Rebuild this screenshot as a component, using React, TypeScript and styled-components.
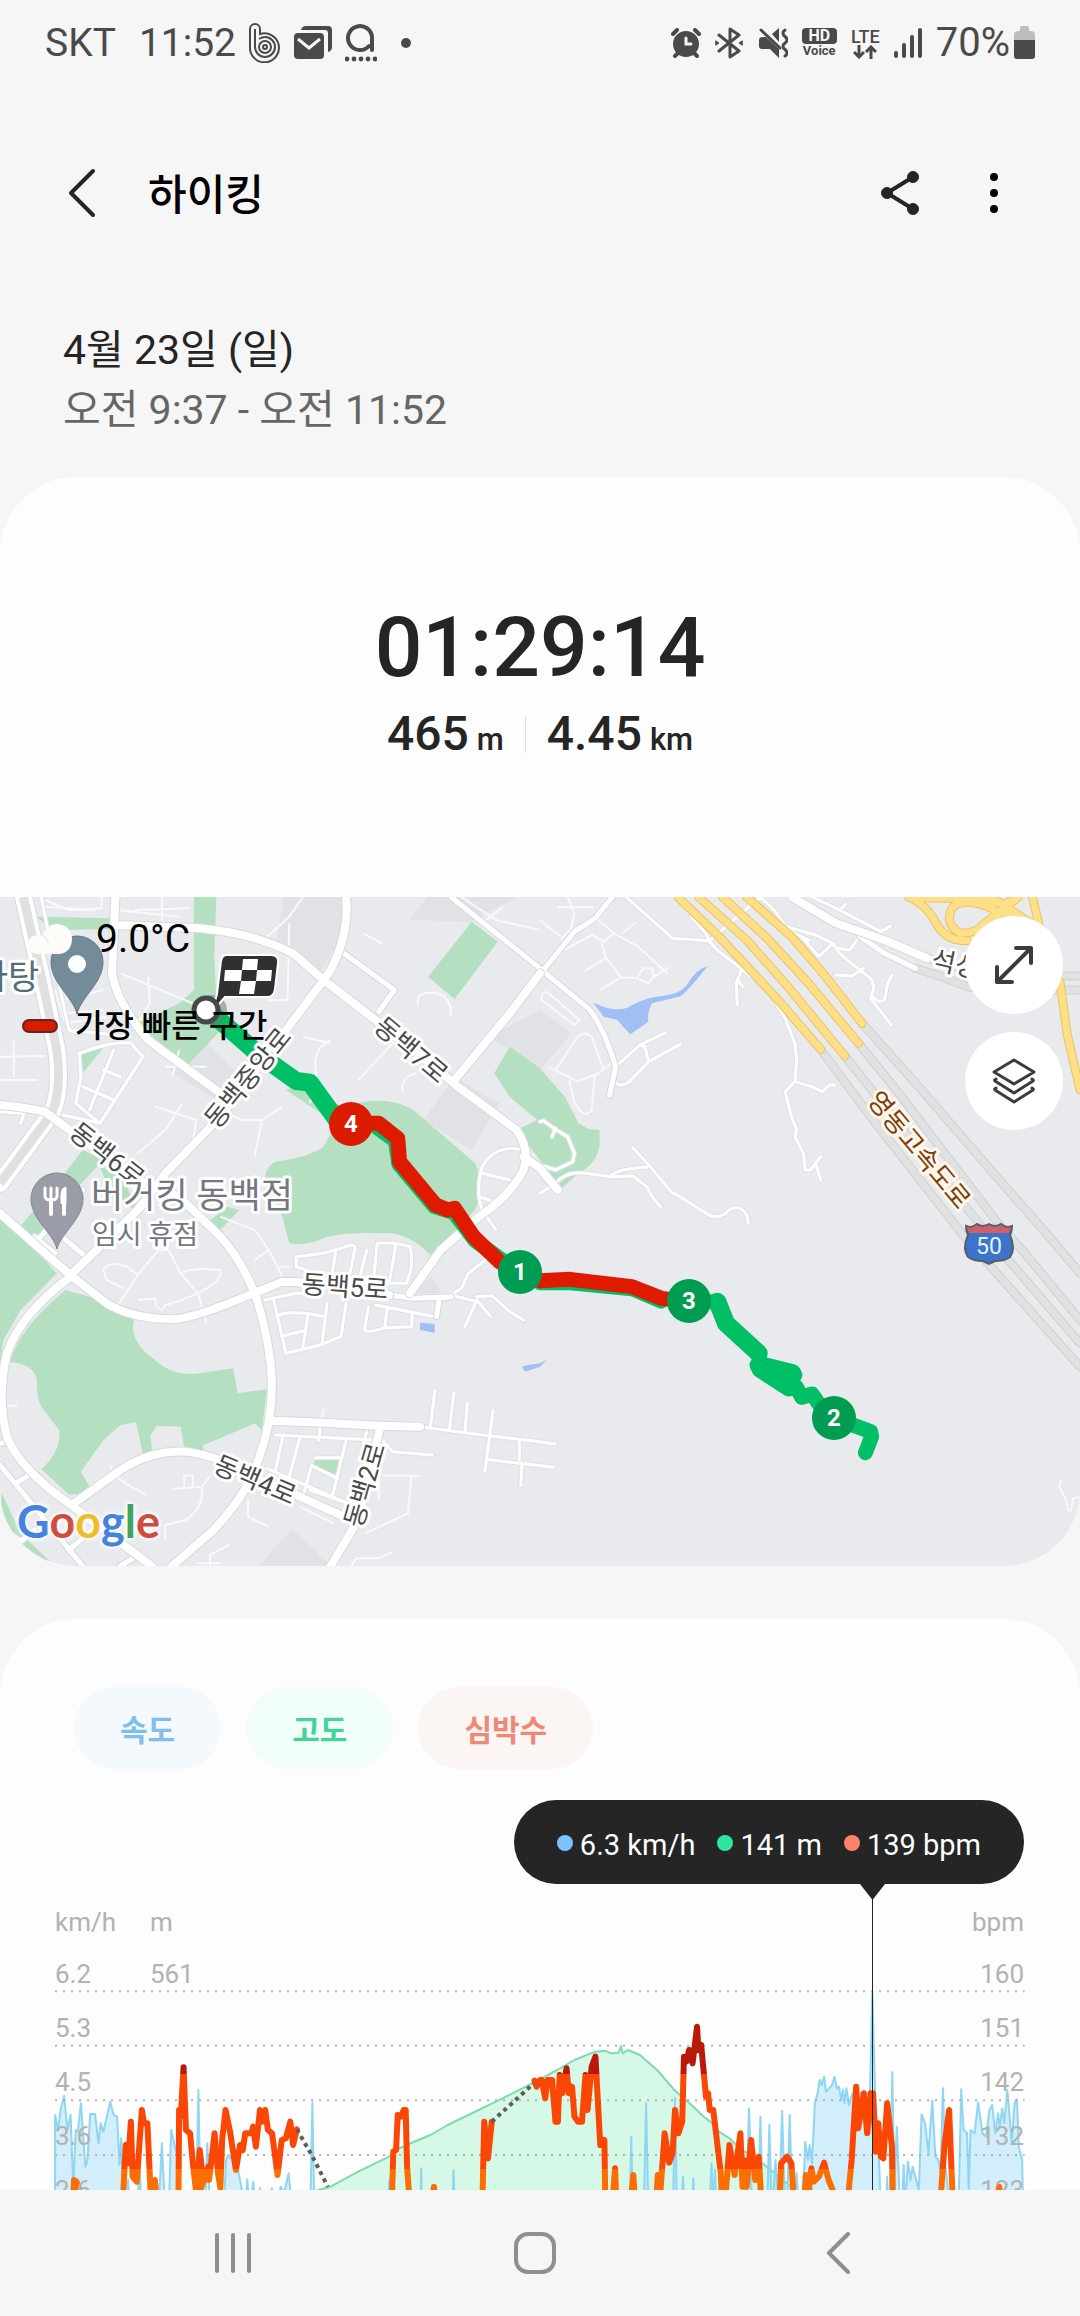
import React from "react";
import styled, { createGlobalStyle } from "styled-components";

const ink = "#252525";
const statusInk = "#4a4a4a";
const pageBg = "#f6f6f6";
const cardBg = "#fdfdfd";

const GlobalStyle = createGlobalStyle`
  * { box-sizing: border-box; }
  html, body { margin: 0; padding: 0; background: ${pageBg}; }
  body {
    font-family: Roboto, "Noto Sans CJK KR", sans-serif;
    color: ${ink};
  }
  button { font: inherit; color: inherit; border: 0; padding: 0; margin: 0; background: none; cursor: pointer; }
  h1, p, ul { margin: 0; padding: 0; }
  svg { display: block; flex: none; }
`;

const Screen = styled.div`
  display: flex;
  flex-direction: column;
  height: 100vh;
  background: ${pageBg};
`;

const Main = styled.main`
  flex: 1;
  min-height: 0;
  overflow: hidden auto;
  scrollbar-width: none;
`;

/* ---------- status bar ---------- */

const StatusBar = styled.div`
  display: flex;
  align-items: center;
  justify-content: space-between;
  height: 86px;
  padding: 0 45px;
  color: ${statusInk};
  line-height: 48px;
`;

const StatusGroup = styled.div<{ $gap: number; $size: number }>`
  display: flex;
  align-items: center;
  gap: ${(p) => p.$gap}px;
  font-size: ${(p) => p.$size}px;
`;

const Carrier = styled.span`
  margin-right: 10px;
`;

const VoiceBadge = styled.span`
  display: flex;
  flex-direction: column;
  align-items: center;
  width: 35px;
  font-size: 13px;
  line-height: 14px;
  font-weight: 700;
`;

const HdBox = styled.span`
  width: 100%;
  border-radius: 4px;
  background: ${statusInk};
  color: ${pageBg};
  font-size: 16px;
  line-height: 16px;
  text-align: center;
`;

const LteBadge = styled.span`
  display: flex;
  flex-direction: column;
  align-items: center;
  width: 29px;
  font-size: 18px;
  line-height: 17px;
  font-weight: 500;
`;

const BatteryGroup = styled.span`
  display: flex;
  align-items: center;
  gap: 4px;
`;

/* ---------- header ---------- */

const AppBar = styled.header`
  display: flex;
  align-items: center;
  height: 110px;
  margin-top: 52px;
  padding: 0 50px;
`;

const IconButton = styled.button`
  display: flex;
  align-items: center;
  justify-content: center;
  width: 64px;
  height: 64px;
`;

const Title = styled.h1`
  flex: 1;
  margin-left: 34px;
  padding-top: 6px;
  font-size: 42px;
  line-height: 56px;
  font-weight: 500;
  color: #000;
`;

const Actions = styled.div`
  display: flex;
  gap: 30px;
  margin-right: 4px;
`;

const When = styled.section`
  padding: 72px 63px 37px;
  font-size: 41px;
  line-height: 60px;
`;

const TimeRange = styled.p`
  color: #666;
`;

/* ---------- summary card ---------- */

const SummaryCard = styled.section`
  overflow: hidden;
  border-radius: 76px;
  background: ${cardBg};
`;

const Summary = styled.div`
  display: flex;
  flex-direction: column;
  align-items: center;
  gap: 6px;
  padding: 121px 0 133px;
`;

const Duration = styled.p`
  font-size: 84px;
  line-height: 100px;
  font-weight: 500;
`;

const Stats = styled.div`
  display: flex;
  align-items: center;
  gap: 21px;
  font-weight: 500;
`;

const Stat = styled.p`
  font-size: 48px;
  line-height: 60px;
`;

const Unit = styled.span`
  margin-left: 8px;
  font-size: 31px;
  line-height: 32px;
`;

const StatDivider = styled.span`
  width: 1px;
  height: 37px;
  background: #dcdcdc;
`;

/* ---------- map ---------- */

const MapFrame = styled.div`
  position: relative;
`;

const MapSvg = styled.svg`
  width: 100%;
  height: auto;

  .terrain path { vector-effect: non-scaling-stroke; stroke-linejoin: round; }
  .labels text { paint-order: stroke; stroke-linejoin: round; dominant-baseline: central; text-anchor: middle; }
`;

const MapInfo = styled.div`
  position: absolute;
  top: 17px;
  left: 22px;
  display: flex;
  flex-direction: column;
  gap: 42px;
  color: #000;
`;

const Weather = styled.div`
  display: flex;
  align-items: center;
  gap: 23px;
  padding-left: 6px;
  font-size: 39px;
  line-height: 50px;
`;

const Legend = styled.div`
  display: flex;
  align-items: center;
  gap: 17px;
  font-size: 32px;
  line-height: 40px;
  font-weight: 500;
`;

const LegendSwatch = styled.span`
  width: 36px;
  height: 14px;
  border: 2px solid #5b2a24;
  border-radius: 7px;
  background: #db1b00;
`;

const MapActions = styled.div`
  position: absolute;
  top: 19px;
  right: 17px;
  display: flex;
  flex-direction: column;
  gap: 18px;
`;

const RoundButton = styled.button`
  display: flex;
  align-items: center;
  justify-content: center;
  width: 98px;
  height: 98px;
  border-radius: 50%;
  background: #fff;
`;

const GoogleMark = styled.span`
  position: absolute;
  left: 17px;
  bottom: 15px;
  font-family: Lato, sans-serif;
  font-size: 45px;
  line-height: 60px;
  font-weight: 700;
  text-shadow: 0 0 4px #fff, 0 0 4px #fff, 0 0 6px #fff;
`;

const Letter = styled.span<{ $color: string }>`
  color: ${(p) => p.$color};
`;

/* ---------- chart card ---------- */

const ChartCard = styled.section`
  margin-top: 53px;
  padding: 68px 56px 60px 55px;
  border-radius: 76px;
  background: ${cardBg};
`;

const Chips = styled.div`
  display: flex;
  gap: 25px;
  padding-left: 19px;
`;

const Chip = styled.button<{ $bg: string; $fg: string }>`
  height: 82px;
  padding: 0 46px;
  border-radius: 41px;
  background: ${(p) => p.$bg};
  color: ${(p) => p.$fg};
  font-size: 30px;
  font-weight: 700;
`;

const Tooltip = styled.div`
  display: flex;
  align-items: center;
  gap: 22px;
  width: fit-content;
  height: 84px;
  margin: 31px 0 0 auto;
  padding: 6px 43px 0;
  border-radius: 42px;
  background: ${ink};
  color: #fff;
  font-size: 29px;
  line-height: 36px;
`;

const Reading = styled.span<{ $dot: string }>`
  display: flex;
  align-items: center;
  gap: 7px;

  &::before {
    content: "";
    width: 16px;
    height: 16px;
    margin-bottom: 4px;
    border-radius: 50%;
    background: ${(p) => p.$dot};
  }
`;

const Chart = styled.div`
  display: grid;
  > * { grid-area: 1 / 1; }
`;

const Plot = styled.svg`
  width: 100%;
  height: 100%;
  overflow: visible;

  path { vector-effect: non-scaling-stroke; stroke-linejoin: round; fill: none; }
`;

const Axis = styled.div`
  display: grid;
  grid-template-rows: 52px;
  grid-auto-rows: 54px;
  padding-top: 23px;
  color: #b2b2b2;
  font-size: 26px;
  line-height: 30px;
`;

const AxisRow = styled.div`
  display: grid;
  grid-template-columns: 95px 1fr auto;
`;

/* ---------- navigation ---------- */

const NavBar = styled.nav`
  display: flex;
  flex: none;
  height: 126px;
  padding: 0 91px 0 82px;
  background: ${pageBg};
`;

const NavButton = styled.button`
  display: flex;
  flex: 1;
  align-items: center;
  justify-content: center;
`;

const blocks = [
  "M825 21H1000L990 140L930 250L800 160Z",
  "M1240 21L1190 90L1370 95L1500 21Z",
  "M490 540L600 460L700 560L640 640Z",
  "M1320 560L1450 640L1370 780L1230 690Z",
  "M1568 360L1660 430L1568 540L1420 440Z",
  "M850 1915L960 2028H750Z",
  "M1255 1160L1280 1210H1190Z",
];

const parks = [
  "M563 21H628L622 200L628 320L660 400L540 530L400 400L520 340L563 300Z",
  "M107 80L320 85V118L150 120Z",
  "M1370 95L1445 155L1320 327L1243 260Z",
  "M230 490L310 462L235 555Z",
  "M1000 650Q1120 610 1200 660L1380 820Q1410 880 1380 960L1250 1095Q1180 1020 1100 1030Q1020 1025 950 1040Q890 1070 840 1060L820 980L770 880Q765 830 800 815Q900 800 940 770L975 700L830 600L860 590Z",
  "M1480 470L1568 535L1640 620L1680 700L1710 718L1740 720L1742 760Q1735 820 1680 850L1625 900L1568 810L1500 720L1560 690L1480 620L1435 550Z",
  "M240 780L300 810L200 920L100 1060L55 1015L180 860Z",
  "M290 830L350 850L400 960L330 930Z",
  "M600 1000L660 950L695 960L620 1040Z",
  "M0 965L165 1150L60 1260L10 1350L0 1420Z",
  "M190 1200L260 1220L340 1270L390 1285Q370 1350 450 1410Q500 1460 580 1450L677 1435L690 1510L775 1498L760 1620L740 1600L650 1640L590 1665V1685L535 1675L525 1610L455 1607L437 1635L442 1690L415 1692L395 1597L350 1605L300 1650L235 1745L260 1790Q240 1815 200 1813L120 1738Q180 1680 172 1620L120 1550Q105 1520 108 1470Q95 1420 30 1417Q50 1320 190 1200Z",
  "M5 1810L60 1930L150 2020L100 2010L0 1880Z",
  "M915 1703L990 1705L980 1765L912 1730Z",
];

const water = [
  "M1723 338Q1778 365 1818 355Q1868 325 1908 320Q1978 315 1998 280Q2018 240 2055 228Q2008 290 1978 318L1893 340Q1878 370 1883 395L1830 433Q1808 410 1793 390L1753 380Z",
  "M1220 1298L1262 1302V1328L1220 1320Z",
  "M1515 1430L1535 1425L1568 1420L1588 1410L1568 1430L1525 1445Z",
];

const lanes = [
  "M130 30L200 60L295 55V21M130 50L280 60",
  "M470 21V120M390 60L550 55M340 60L520 80",
  "M880 21L840 80L765 150",
  "M840 100L835 330L780 330",
  "M1340 21L1440 90L1568 120M1400 100L1460 50",
  "M1215 350Q1200 300 1270 310Q1310 320 1310 380M1170 400L1140 460L1040 570",
  "M960 450Q900 480 920 560L900 640",
  "M880 440L960 460M1055 130L1110 160",
  "M1170 610Q1160 560 1210 550",
  "M430 260L435 340L400 400M350 250L560 340",
  "M180 330L300 300M190 370L300 360M160 300L190 400L310 380",
  "M0 500L130 498M40 450V560M0 570H110",
  "M480 530H600M520 480L500 560",
  "M450 650L570 690L560 760M530 640L480 720L400 790",
  "M600 640L700 690L760 690L820 650M760 690L740 800",
  "M640 980L740 1020L780 1080L820 1160M740 1110L780 1080M810 1130H840",
  "M300 1140Q320 1110 370 1130L400 1155L340 1250M300 1140L310 1170L360 1195",
  "M400 1155L460 1080L490 1080L525 1150L575 1210L600 1300M575 1210L515 1235L480 1245L470 1260L455 1250L450 1225L400 1230M525 1150Q560 1130 640 1140Q650 1170 575 1210",
  "M0 1547H50M320 1725L330 1755L380 1790L425 1815",
  "M500 1797L585 1790Q595 1850 540 1890L480 1905V1950M535 1797V1757L560 1755V1795M585 1790L610 1760",
  "M665 1965L610 1995V2028M570 2020H640M720 1830V1880L780 1910M870 1850L970 1900",
  "M940 1555L930 1620M1110 1757H1220M1195 1757L1185 1870L1060 1930M1100 1757V1830",
  "M1020 2028L1035 2005H1100L1140 1985",
  "M1738 90L1783 130L1853 170L1938 250M1783 130L1748 160L1758 200L1803 262L1848 265L1868 235L1893 235L1898 260L1883 280L1848 265",
  "M1808 130L1846 97M1638 180L1718 135L1753 155M1698 243L1758 205M1743 300L1803 262M1900 260L1940 232",
  "M1648 21L1668 70L1658 115L1628 150M1568 90L1628 140M1618 52H1723",
  "M1593 530L1678 575L1738 550L1773 520M1613 540L1678 440Q1698 420 1718 440L1753 540",
  "M1653 570L1668 640Q1698 690 1718 660L1728 550",
  "M1573 315L1588 305L1683 390L1668 405L1573 330Z",
  "M3080 1770L3076 1790L3096 1830L3102 1860L3110 1862L3116 1825L3136 1820",
];

const streets = [
  "M230 490Q330 450 380 460L415 500L290 700L220 640L235 560Z",
  "M330 480L260 660M240 590L330 630M350 560L300 540M160 670L290 700",
  "M120 21L150 180L200 420L230 430",
  "M0 665L70 670L60 700M200 420L380 440",
  "M860 1100L940 1090L1020 1065Q1035 1065 1030 1080L1010 1180M860 1100V1130L900 1145M975 1085L965 1150",
  "M1065 1080L1040 1180M1095 1060Q1150 1055 1190 1070Q1205 1120 1180 1180L1130 1180M1095 1060L1085 1170M1150 1060L1130 1180",
  "M770 1230L860 1210L900 1213M795 1230L830 1390L930 1365L990 1340L1005 1240M810 1275Q850 1260 945 1280M820 1338L885 1322M895 1270L878 1380M950 1240L935 1362",
  "M1070 1250L1058 1320L1075 1325L1120 1313L1195 1310L1197 1265M1125 1250L1117 1313M1090 1245L1270 1282L1275 1225",
  "M1350 1310L1385 1230L1425 1280M1310 1215L1340 1195L1360 1150L1410 1110M1385 1220L1430 1218L1480 1265L1520 1290M1310 1215L1385 1235",
  "M1220 1610L1400 1635L1568 1655L1613 1662M1263 1500L1250 1608M1318 1508L1305 1618M1357 1540L1350 1625M1432 1560L1408 1745M1412 1708L1608 1732M1508 1655V1710M1516 1718L1512 1787",
  "M800 1635L1090 1650M820 1645L800 1740M870 1645L840 1760M930 1610L925 1650M1005 1650L965 1820M915 1703L990 1703M910 1730L980 1765M775 1735L1010 1840L900 1800M905 1725L880 1820M1065 1625L1055 1660",
  "M1110 1650L1140 1685L1255 1695",
  "M1818 21L1953 145L2058 152L2088 185L2158 240L2228 300L2278 380L2308 460L2313 510L2308 575L2280 605L2298 680L2313 720L2308 740L2333 790L2338 840L2353 840L2383 800M2368 820L2383 870",
  "M2308 575L2358 590L2388 605L2408 585L2423 585",
  "M2208 21L2248 60L2288 120L2348 150M2058 155L2118 100L2208 21M2008 80L2050 130L2058 152M2153 240L2138 280L2141 345M2141 270L2158 290",
  "M2283 110L2368 135L2418 160L2438 190L2478 225L2528 265L2538 290L2528 325L2588 405M2418 160L2378 200L2328 140",
  "M2428 255L2473 258L2508 235M2533 320L2553 335L2568 330L2578 280L2590 255M2358 21L2438 60L2558 125L2586 108M2438 60L2456 42M2428 175L2468 180L2488 150",
  "M1788 530L1858 465L1933 428M1858 465L1873 470L1883 515L1975 463M1883 515L1828 575Q1803 595 1783 575",
  "M1838 773L1888 830L1948 905L1998 935L2058 975Q2088 990 2118 960Q2148 940 2168 975L2173 998",
  "M1613 880Q1648 840 1698 850L1778 860L1838 858L1878 890L1893 920L1918 950M1773 858Q1798 835 1878 832",
  "M1568 695L1578 692L1608 715L1648 740L1668 790L1663 815L1613 840L1568 825M1613 715L1603 740",
  "M1568 910L1613 880M1440 1020L1400 960Q1380 900 1400 830Q1440 760 1520 780M1400 850L1480 870M1390 920L1450 940",
];

const avenues = [
  "M985 180L1145 300L1100 365",
  "M1310 21L1568 235",
  "M1778 21L1728 85L1668 125L1578 240L1568 250M1578 245L1708 355Q1748 400 1788 530L1770 615",
  "M0 1725L240 2028M0 1660L25 1655M45 1780L85 1755M30 1930L60 1955L100 1920M200 1980L280 1910M350 2028L385 2005",
  "M100 1060L240 900M180 1040L260 1110M100 1040L160 1090",
  "M1130 1215L1200 1225L1310 1220L1275 1225L1268 1280",
  "M2498 140L2568 190L2658 235",
];

const arterials = [
  "M335 21L325 250Q340 340 430 450L640 610",
  "M340 105L580 115Q740 130 850 190L940 270L1090 390L1330 590L1500 720Q1540 780 1520 840Q1480 920 1390 980L1280 1080L1190 1210",
  "M1005 21Q1015 130 960 240L940 270L780 490L640 680L480 850L400 960L210 1150",
  "M1568 250L1480 370L1320 570M1520 800L1568 835L1620 900",
  "M0 645Q60 650 130 665L280 780L400 870L520 920L640 1040Q700 1110 740 1210Q785 1350 790 1480Q790 1600 750 1710Q720 1810 620 1920L500 2028",
  "M205 1160Q60 1270 20 1390Q-10 1520 20 1640Q60 1740 200 1840L440 2028",
  "M0 970L120 1080L210 1160L310 1240Q380 1285 500 1288Q560 1285 700 1225L820 1175L900 1178L1130 1215",
  "M215 1840L350 1740Q440 1680 540 1685Q640 1700 700 1745L850 1810L1030 1895",
  "M790 1592L940 1598L1100 1607L1220 1610M1105 1607L1040 1890L960 2028",
  "M2300 21L2428 100L2568 150L2693 205",
];

const expressway = [
  "M1968 21L2088 140L2188 250L2268 340L2383 478",
  "M2028 21L2168 150L2288 290L2453 498",
  "M2098 21L2228 145L2348 280L2493 460",
  "M2168 21L2298 140L2398 260L2503 400",
  "M2638 21Q2688 40 2718 100Q2748 155 2808 152",
  "M2928 35Q2868 130 2788 130Q2738 100 2768 50Q2808 20 2888 60L2998 110",
  "M2668 24Q2818 22 2908 40M2878 21L3008 110M2958 21L2908 60L2848 110M2998 21L3018 110",
  "M3078 275L3098 430L3136 600",
];

const tunnels = [
  "M2383 478L2528 680L2808 1050L2868 1120L3136 1430",
  "M2453 498L2578 660L2858 1020L2928 1110L3136 1360",
  "M2493 460L2618 620L2898 1000L2968 1080L3136 1290",
  "M2503 400L2668 590L2868 830L3038 1030L3136 1150",
  "M2658 235L2748 265L2808 290L2900 300H3136M2693 205L2808 240L2900 258H3136",
];

const routeGreen = [
  "M600 360L750 490L860 575L900 580L985 700",
  "M1095 712L1148 752L1158 822L1262 950L1318 968L1380 1052L1510 1150",
  "M1568 1178L1655 1178L1835 1196L1920 1233",
  "M2003 1235H2083L2108 1305L2203 1385L2205 1420L2303 1445L2308 1455L2283 1465",
  "M2198 1425L2205 1440L2290 1497L2313 1492L2328 1522L2358 1512L2378 1542L2423 1585L2528 1625L2531 1640L2513 1688",
];

const routeDoubled = "M620 375L750 492L860 573L900 578L985 700M2083 1235L2108 1300L2203 1390";

const routeRed =
  "M1020 700H1100L1155 745L1160 815L1265 945L1300 960L1320 955L1375 1040L1450 1115L1510 1145L1568 1172L1655 1168L1835 1190L1920 1225L2003 1235";

const roadNames = [
  { text: "동백7로", x: 411, y: 153, turn: 40 },
  { text: "동백중앙로", x: 248, y: 181, turn: -51 },
  { text: "동백6로", x: 107, y: 258, turn: 38 },
  { text: "동백5로", x: 345, y: 390, turn: 4 },
  { text: "동백4로", x: 255, y: 583, turn: 23 },
  { text: "동백2로", x: 365, y: 588, turn: -74 },
  { text: "석성로", x: 967, y: 70, turn: 12 },
];

const splits = [
  { n: 4, x: 351, y: 227, color: "#db1b00" },
  { n: 1, x: 520, y: 375, color: "#009c52" },
  { n: 3, x: 689, y: 404, color: "#009c52" },
  { n: 2, x: 834, y: 521, color: "#009c52" },
];

function Road({ paths, width, color = "#fff", casing = "#d6d9de" }: { paths: string[]; width: number; color?: string; casing?: string }) {
  const d = paths.join("");
  return (
    <g fill="none" strokeLinecap="round">
      <path d={d} stroke={casing} strokeWidth={width + 2} />
      <path d={d} stroke={color} strokeWidth={width} />
    </g>
  );
}

function TrailMap() {
  const rail = "M68 21L120 260L165 480Q180 600 150 670L0 880";
  return (
    <MapSvg viewBox="0 0 1080 669" role="img" aria-label="하이킹 경로 지도">
      <rect width="1080" height="669" fill="#e8eaed" />
      <g className="terrain" transform="scale(.34439 .33333) translate(0 -21)">
        <path d={blocks.join("")} fill="#e1e2e6" />
        <path d={parks.join("")} fill="#b4dfc1" />
        <path d={water.join("")} fill="#9fbff5" />
        <path d={lanes.join("")} fill="none" stroke="#f8f9fa" strokeWidth="2" />
        <Road paths={streets} width={3} casing="#dfe1e5" />
        <Road paths={[rail]} width={17} />
        <path d={rail} fill="none" stroke="#e0e0e0" strokeWidth="9" />
        <Road paths={tunnels} width={7} color="#e0e1e1" casing="#cfd0d0" />
        <Road paths={avenues} width={5} />
        <Road paths={arterials} width={8} />
        <Road paths={expressway} width={7} color="#fddf88" casing="#edc266" />
        <g fill="none" strokeLinecap="round" strokeWidth="15">
          <path d={routeGreen.join("")} stroke="#01bf64" />
          <path d={routeDoubled} stroke="#01bf64" strokeWidth="18" />
          <path d={routeRed} stroke="#de1b00" />
        </g>
      </g>

      <g className="labels" fontSize="26" fill="#4a4a4a" stroke="#fff" strokeWidth="6">
        {roadNames.map((r) => (
          <text key={r.text} transform={`translate(${r.x} ${r.y}) rotate(${r.turn})`}>{r.text}</text>
        ))}
        <text transform="translate(919 253) rotate(50)" fill="#7a3d0c" stroke="#fff7ea">영동고속도로</text>
        <text x="8" y="80" fontSize="34" fill="#546e7a">사탕</text>
        <text x="192" y="299" fontSize="35" fill="#757780">버거킹 동백점</text>
        <text x="145" y="338" fontSize="27" fill="#757780">임시 휴점</text>
      </g>

      <path d="M77 117C73 100 51 86 51 65A26 26 0 0 1 103 65C103 86 81 100 77 117Z" fill="#748c99" stroke="#62798a" />
      <circle cx="77" cy="67" r="9" fill="#fff" />
      <path d="M57 352C53 336 31 322 31 302A26 26 0 0 1 83 302C83 322 61 336 57 352Z" fill="#9a9ca8" stroke="#858792" />
      <g stroke="#fff" fill="none" strokeLinecap="round">
        <path d="M45 291v8q0 4 6 4t6-4v-8M51 291v12" strokeWidth="3" />
        <path d="M51 303v14" strokeWidth="4" />
        <path d="M64 317v-24" strokeWidth="4" />
        <path d="M61 306v-8q0-7 5-8v16z" fill="#fff" strokeWidth="1" />
      </g>

      <path d="M966 329q6 3 11-2 6 4 12 0 6 4 12 0 5 5 11 2 0 5-2 9 6 14 0 22-5 4-15 4l-6 3-6-3q-10 0-15-4-6-8 0-22-2-4-2-9z" fill="#3a74cb" stroke="#5b5d66" strokeWidth="2" />
      <path d="M967 330q5 2 10-2 6 4 12 0 6 4 12 0 5 4 10 2l-2 6h-40z" fill="#cf5f69" />
      <text x="989" y="357" fontSize="23" fill="#e6f0ff" textAnchor="middle">50</text>

      {splits.map((s) => (
        <g key={s.n}>
          <circle cx={s.x} cy={s.y} r="22" fill={s.color} />
          <text x={s.x} y={s.y + 8} fontSize="24" fontWeight="700" fill="#fff" textAnchor="middle">{s.n}</text>
        </g>
      ))}

      <circle cx="212" cy="113" r="15" fill="#6b7370" opacity=".5" />
      <path d="M227 58h44q8 0 7 8l-3 26q-1 8-8 8h-42l-13 15 5-18 4-33q1-6 6-6z" fill="#303030" stroke="#fff" strokeWidth="2" />
      <path d="M243 62h15l-1 11h15l-1 11h-15l-2 13h-15l2-13h-17l1-11h17z" fill="#fff" />
      <path d="M242 73h15l-1 11h-15z" fill="#303030" />
      <circle cx="206" cy="113" r="12" fill="#fff" stroke="#484848" strokeWidth="5" />
    </MapSvg>
  );
}

/* ---------- chart data, same survey units ---------- */

const axisRows = [
  ["km/h", "m", "bpm"],
  ["6.2", "561", "160"],
  ["5.3", "", "151"],
  ["4.5", "", "142"],
  ["3.6", "", "132"],
  ["2.6", "", "123"],
];

const speedRuns = [
  "M160 760V465L168 510L176 450L186 408L196 510L205 465L213 690L220 510L226 515L235 430L248 620L254 600L262 462H276L286 550L292 490L300 515L308 480L320 425L330 465L340 470L347 615L352 535L358 760Z",
  "M490 760L497 510L515 590L520 760Z",
  "M650 760L656 600L663 585L690 620L702 690L712 760L718 658L726 760L735 665L745 760L755 685L765 760L790 685L800 760L815 680L825 700L838 640L850 760Z",
  "M2330 760L2336 600L2338 545L2346 600L2351 555L2358 610L2366 430L2374 400L2380 360L2386 375L2393 350L2398 395L2408 385L2416 375L2423 350L2430 385L2436 380L2443 420L2448 390L2452 430L2458 385L2465 435L2476 400H2526L2533 95L2541 400L2553 620L2558 760Z",
  "M2628 760L2636 605L2644 660L2650 620L2668 690L2676 463L2686 490L2696 580L2707 422L2716 590L2725 600L2731 640L2738 385L2745 620L2760 760Z",
  "M2783 760L2791 388L2798 510L2808 520L2813 690L2818 510L2830 520L2840 428L2853 520L2863 530L2873 450L2881 435L2890 520L2898 460L2903 500L2910 445L2916 490L2925 390L2934 500L2938 550L2946 430L2953 418L2958 560L2968 600L2971 760Z",
];

const speedSpikes: [number, number, number][] = [
  [372, 660, 5], [405, 600, 6], [470, 550, 10], [576, 390, 7], [602, 550, 8], [907, 428, 6],
  [1130, 660, 3], [1223, 625, 3], [1317, 630, 4], [1833, 530, 5], [1876, 430, 7], [1960, 415, 6],
  [1983, 650, 6], [2013, 655, 5], [2066, 610, 6], [2076, 630, 5], [2175, 445, 9], [2208, 470, 7],
  [2234, 495, 7], [2252, 600, 10], [2271, 452, 9], [2293, 465, 8], [2313, 640, 8], [2576, 650, 4],
  [2591, 337, 7], [2604, 500, 10], [2624, 615, 5],
];

const elevation =
  "M850 725L925 690L960 680L1040 635L1130 590L1150 570L1180 555L1250 525L1300 495L1390 450L1440 425L1568 358L1618 330L1668 300L1728 275L1758 272L1773 280L1796 278L1803 258L1808 280L1823 270L1858 285L1908 330L1958 390L2008 435L2038 465L2068 490L2088 515L2118 535L2148 565L2208 605L2268 655L2308 690L2380 760";

const heartRate = [
  "M210 760L215 660L222 665L230 690L235 760",
  "M355 760L365 555L372 610L380 485L385 650L397 665L412 450L418 490H428L437 690L450 660L458 760",
  "M518 760L520 450L525 470L533 322L540 510L552 520L560 610L570 700L580 570L590 660L572 720L605 620L607 660L623 520L633 640L640 685L645 540L655 450L668 515L685 630L697 555L705 570L712 520H730L735 500L743 560L755 450L762 485L770 450L778 510L790 520L806 645L818 540L830 535L843 485L851 555L862 508",
  "M1137 760L1142 575L1150 570L1155 465L1165 470L1172 450H1178L1182 620L1192 760",
  "M1250 760L1260 680L1268 760",
  "M1400 760L1406 485L1417 595L1428 485",
  "M1552 362L1558 380L1568 360H1573L1583 415L1590 360H1603L1613 485H1620L1625 345L1633 400L1645 325L1652 400L1661 380L1668 470L1678 485H1690L1700 345L1706 450L1718 320L1729 290L1743 555L1755 540L1758 760",
  "M1776 760L1786 625L1791 760M1828 760L1839 645L1846 760",
  "M1903 760L1910 645L1918 690L1930 520L1943 608L1953 580L1960 450L1970 520L1981 485L1986 290L1993 305L2001 270L2011 310L2024 200L2028 270L2036 255L2050 410L2056 400L2061 450H2071L2093 640L2098 760",
  "M2103 760L2118 555L2133 645L2150 520L2156 680H2168L2181 540L2193 660L2203 590L2213 760M2160 600V680",
  "M2263 760L2268 610L2286 590L2298 610L2308 760",
  "M2333 760L2340 645L2348 690L2356 625L2363 665L2378 650L2393 608L2406 660L2418 690L2428 760M2350 650V760",
  "M2458 760L2473 600L2486 380L2492 505L2508 400L2518 520L2528 400H2535L2543 575L2550 490L2558 590L2565 595L2576 430L2590 560L2593 760",
  "M2728 760L2743 550L2756 450L2768 760",
  "M2888 760L2901 680L2910 760",
];

function ActivityPlot() {
  const speed = speedRuns.join("") + speedSpikes.map(([x, y, w]) => `M${x - w} 760L${x} ${y}L${x + w} 760Z`).join("");
  return (
    <Plot viewBox="0 0 969 345" preserveAspectRatio="none" role="img" aria-label="속도, 고도, 심박수 그래프">
      <defs>
        <linearGradient id="zones" gradientUnits="userSpaceOnUse" x1="0" y1="0" x2="0" y2="800">
          <stop offset="0" stopColor="#c41400" />
          <stop offset=".4275" stopColor="#b81a0a" />
          <stop offset=".4275" stopColor="#fb4706" />
          <stop offset=".78375" stopColor="#fb4706" />
          <stop offset=".78375" stopColor="#fc6e04" />
          <stop offset="1" stopColor="#fc6e04" />
        </linearGradient>
      </defs>
      <g transform="translate(-55 76) scale(.34439 .33333)">
        <path d={elevation + "H850Z"} style={{ fill: "#d6f8e6" }} />
        <path d={elevation} stroke="#7ddcab" strokeWidth="2" />
        <path d={speed} stroke="#8ed6f2" strokeWidth="2" style={{ fill: "#8ed6f4", fillOpacity: 0.4 }} />
        <path d="M160 94H2975M160 257H2975M160 421H2975M160 585H2975" stroke="#aeb2b0" strokeWidth="2" strokeDasharray="2 6" />
        <path d={heartRate.join("")} stroke="url(#zones)" strokeWidth="6" strokeLinecap="round" />
        <path d="M862 508L905 585L952 680M1428 485L1550 370" stroke="#5a5f5c" strokeWidth="4" strokeDasharray="4 4" />
      </g>
      <line x1="817.5" y1="0" x2="817.5" y2="345" stroke={ink} strokeWidth="1" />
      <polygon points="805,0 830,0 817.5,16" fill={ink} />
    </Plot>
  );
}

/* ---------- small icons ---------- */

const BoldDot = () => (
  <svg width="32" height="40" viewBox="0 0 32 40"><circle cx="16" cy="20" r="5" fill={statusInk} /></svg>
);

const LoopIcon = () => (
  <svg width="32" height="40" viewBox="0 0 32 40" fill="none" stroke={statusInk} strokeWidth="2">
    <path d="M1 24V6a5 5 0 0 1 10 0v5A14.5 14.5 0 1 1 1 24Z" />
    <path d="M6 6v18a10 10 0 1 0 10-10q-3 0-6 2" />
    <circle cx="16" cy="24" r="6" />
    <circle cx="16" cy="24" r="2" />
  </svg>
);

const MailIcon = () => (
  <svg width="38" height="34" viewBox="0 0 38 34">
    <path d="M7 4q1-4 5-4h22q4 0 4 4v17q0 4-4 5V7q0-3-3-3z" fill={statusInk} />
    <rect y="7" width="30" height="26" rx="4" fill={statusInk} />
    <path d="M4 13l11 9 11-9" fill="none" stroke={pageBg} strokeWidth="3" />
  </svg>
);

const AIcon = () => (
  <svg width="32" height="38" viewBox="0 0 32 38" fill={statusInk}>
    <path d="M27 26V14A12 12 0 1 0 24 22" fill="none" stroke={statusInk} strokeWidth="4" strokeLinecap="round" />
    {[2, 9, 16, 23, 30].map((x) => <circle key={x} cx={x} cy="35" r="2.4" />)}
  </svg>
);

const AlarmIcon = () => (
  <svg width="30" height="30" viewBox="0 0 30 30" stroke={statusInk} strokeWidth="4" strokeLinecap="round">
    <path d="M2 6l4-4M28 6l-4-4M7 25l-3 3M23 25l3 3" />
    <circle cx="15" cy="16" r="11" fill={statusInk} />
    <path d="M15 10v6h5" fill="none" stroke={pageBg} strokeWidth="3" />
  </svg>
);

const BluetoothIcon = () => (
  <svg width="30" height="32" viewBox="0 0 30 32" fill="none" stroke={statusInk} strokeWidth="3" strokeLinecap="round" strokeLinejoin="round">
    <path d="M4 8l20 16-9 6V2l9 6L4 24" />
    <path d="M1 14l3 2-3 2zM27 14l-3 2 3 2z" strokeWidth="1" fill={statusInk} />
  </svg>
);

const MuteIcon = () => (
  <svg width="29" height="30" viewBox="0 0 29 30">
    <path d="M13 6l7-6v14zM0 12q0-3 4-3h3l13 12v9l-9-9H3q-3 0-3-3z" fill={statusInk} />
    <path d="M2 2l19 18M26 2q-4 3 0 6.500t0 6.500t0 6.500t0 6.500" fill="none" stroke={statusInk} strokeWidth="3" strokeLinecap="round" />
  </svg>
);

const SignalIcon = () => (
  <svg width="28" height="30" viewBox="0 0 28 30" stroke={statusInk} strokeWidth="4" strokeLinecap="round">
    <path d="M2 25v3M10 17v11M18 9v19M26 2v26" />
  </svg>
);

const BatteryIcon = () => (
  <svg width="21" height="34" viewBox="0 0 21 34">
    <path d="M6 2q0-2 2-2h5q2 0 2 2v3h2q4 0 4 4v6H0V9q0-4 4-4h2z" fill="#bdbdbd" />
    <path d="M0 14h21v16q0 3-3 3H3q-3 0-3-3z" fill={statusInk} />
  </svg>
);

export default function App() {
  return (
    <Screen>
      <GlobalStyle />
      <Main>
        <StatusBar>
          <StatusGroup $gap={13} $size={39}>
            <Carrier>SKT</Carrier>
            <span>11:52</span>
            <LoopIcon />
            <MailIcon />
            <AIcon />
            <BoldDot />
          </StatusGroup>
          <StatusGroup $gap={14} $size={40}>
            <AlarmIcon />
            <BluetoothIcon />
            <MuteIcon />
            <VoiceBadge><HdBox>HD</HdBox>Voice</VoiceBadge>
            <LteBadge>
              LTE
              <svg width="24" height="14" viewBox="0 0 24 14" fill="none" stroke={statusInk} strokeWidth="3">
                <path d="M6 0v12M1 7l5 5 5-5M18 14V2M13 7l5-5 5 5" />
              </svg>
            </LteBadge>
            <SignalIcon />
            <BatteryGroup>70%<BatteryIcon /></BatteryGroup>
          </StatusGroup>
        </StatusBar>

        <AppBar>
          <IconButton aria-label="뒤로">
            <svg width="28" height="50" viewBox="0 0 28 50" fill="none" stroke={ink} strokeWidth="4" strokeLinecap="round" strokeLinejoin="round">
              <path d="M25 3L3 25l22 22" />
            </svg>
          </IconButton>
          <Title>하이킹</Title>
          <Actions>
            <IconButton aria-label="공유">
              <svg width="38" height="44" viewBox="0 0 38 44" fill={ink} stroke={ink}>
                <path d="M32 6L6 22l26 16" fill="none" strokeWidth="4" />
                <circle cx="32" cy="6" r="5.500" />
                <circle cx="6" cy="22" r="5.500" />
                <circle cx="32" cy="38" r="5.500" />
              </svg>
            </IconButton>
            <IconButton aria-label="더보기">
              <svg width="10" height="44" viewBox="0 0 10 44">
                <circle cx="5" cy="6" r="4" /><circle cx="5" cy="22" r="4" /><circle cx="5" cy="38" r="4" />
              </svg>
            </IconButton>
          </Actions>
        </AppBar>

        <When>
          <p>4월 23일 (일)</p>
          <TimeRange>오전 9:37 - 오전 11:52</TimeRange>
        </When>

        <SummaryCard>
          <Summary>
            <Duration>01:29:14</Duration>
            <Stats>
              <Stat>465<Unit>m</Unit></Stat>
              <StatDivider />
              <Stat>4.45<Unit>km</Unit></Stat>
            </Stats>
          </Summary>
          <MapFrame>
            <TrailMap />
            <MapInfo>
              <Weather>
                <svg width="45" height="30" viewBox="0 0 45 30">
                  <path d="M9 30Q0 29 0 20q1-9 10-9 3 0 5 1Q18 0 29 0q14 1 15 14 0 14-12 16z" fill="#fdfcf9" />
                  <path d="M15 12q5 3 5 9" fill="none" stroke="#f0eee9" strokeWidth="2" />
                </svg>
                9.0°C
              </Weather>
              <Legend><LegendSwatch />가장 빠른 구간</Legend>
            </MapInfo>
            <MapActions>
              <RoundButton aria-label="지도 확대">
                <svg width="40" height="40" viewBox="0 0 40 40" fill="none" stroke="#3c3c3c" strokeWidth="4" strokeLinecap="round" strokeLinejoin="round">
                  <path d="M3 37L37 3M22 3h15v15M18 37H3V22" />
                </svg>
              </RoundButton>
              <RoundButton aria-label="지도 유형">
                <svg width="44" height="46" viewBox="0 0 44 46" fill="none" stroke="#3c3c3c" strokeWidth="3" strokeLinecap="round" strokeLinejoin="round">
                  <path d="M22 2l20 12-20 12L2 14zM4 21q-2 1-1 2l19 12 19-12q1-1-1-2M4 30q-2 1-1 2l19 12 19-12q1-1-1-2" />
                </svg>
              </RoundButton>
            </MapActions>
            <GoogleMark>
              <Letter $color="#4483e0">G</Letter>
              <Letter $color="#d14c40">o</Letter>
              <Letter $color="#eebd2a">o</Letter>
              <Letter $color="#4483e0">g</Letter>
              <Letter $color="#42a45c">l</Letter>
              <Letter $color="#d14c40">e</Letter>
            </GoogleMark>
          </MapFrame>
        </SummaryCard>

        <ChartCard>
          <Chips>
            <Chip $bg="#f4f9fd" $fg="#82bdeb">속도</Chip>
            <Chip $bg="#f0fdf8" $fg="#45d39b">고도</Chip>
            <Chip $bg="#fbf5f4" $fg="#ef8975">심박수</Chip>
          </Chips>
          <Tooltip>
            <Reading $dot="#7ac4fd">6.3 km/h</Reading>
            <Reading $dot="#30e69c">141 m</Reading>
            <Reading $dot="#ff836b">139 bpm</Reading>
          </Tooltip>
          <Chart>
            <ActivityPlot />
            <Axis>
              {axisRows.map(([left, mid, right]) => (
                <AxisRow key={left}>
                  <span>{left}</span>
                  <span>{mid}</span>
                  <span>{right}</span>
                </AxisRow>
              ))}
            </Axis>
          </Chart>
        </ChartCard>
      </Main>

      <NavBar>
        <NavButton aria-label="최근 앱">
          <svg width="38" height="42" viewBox="0 0 38 42" stroke="#8f8f8f" strokeWidth="4" strokeLinecap="round">
            <path d="M3 3v36M19 3v36M35 3v36" />
          </svg>
        </NavButton>
        <NavButton aria-label="홈">
          <svg width="42" height="42" viewBox="0 0 42 42" fill="none" stroke="#8f8f8f" strokeWidth="4">
            <rect x="2" y="2" width="38" height="38" rx="12" />
          </svg>
        </NavButton>
        <NavButton aria-label="뒤로 가기">
          <svg width="24" height="42" viewBox="0 0 24 42" fill="none" stroke="#8f8f8f" strokeWidth="4" strokeLinecap="round" strokeLinejoin="round">
            <path d="M22 2L3 21l19 19" />
          </svg>
        </NavButton>
      </NavBar>
    </Screen>
  );
}
